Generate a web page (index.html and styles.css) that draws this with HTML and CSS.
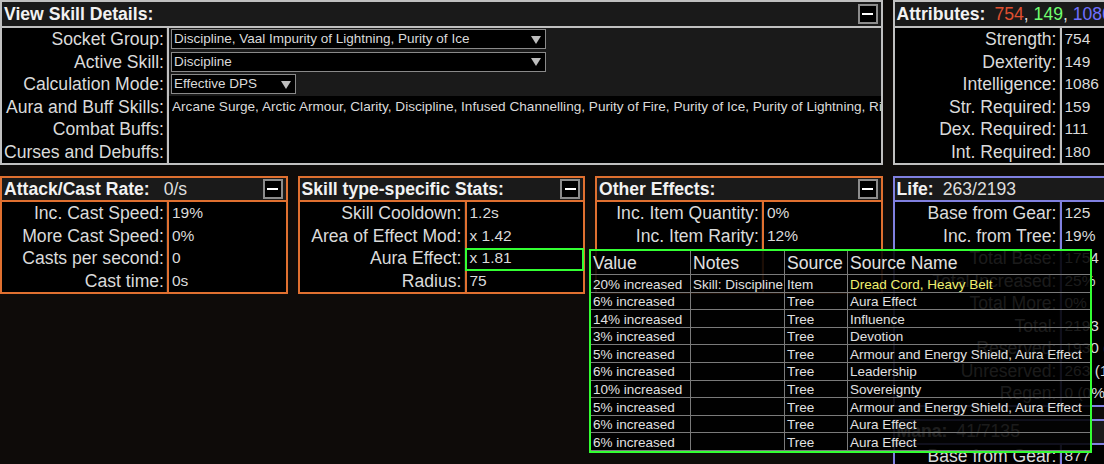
FILE: index.html
```html
<!DOCTYPE html>
<html>
<head>
<meta charset="utf-8">
<title>Calcs</title>
<link rel="stylesheet" href="styles.css">
</head>
<body>
<div class="calcs">
  <section class="sec gray span3 tall">
    <div class="head"><b>View Skill Details:</b><span class="min"></span></div>
    <div class="body">
      <div class="labels">
        <div>Socket Group:</div>
        <div>Active Skill:</div>
        <div>Calculation Mode:</div>
        <div>Aura and Buff Skills:</div>
        <div>Combat Buffs:</div>
        <div>Curses and Debuffs:</div>
      </div>
      <div class="values mixed">
        <div class="v"><div class="dd w1"><span>Discipline, Vaal Impurity of Lightning, Purity of Ice</span><i class="tri"></i></div></div>
        <div class="v"><div class="dd w1"><span>Discipline</span><i class="tri"></i></div></div>
        <div class="v"><div class="dd w2"><span>Effective DPS</span><i class="tri"></i></div></div>
        <div class="blk">
          <div class="v small">Arcane Surge, Arctic Armour, Clarity, Discipline, Infused Channelling, Purity of Fire, Purity of Ice, Purity of Lightning, Righteous Fire, Vaal Impurity of Lightning</div>
          <div class="v small"></div>
          <div class="v small"></div>
        </div>
      </div>
    </div>
  </section>

  <section class="sec gray tall">
    <div class="head"><b>Attributes:</b><span class="str">754</span>,&nbsp;<span class="dex">149</span>,&nbsp;<span class="int">1086</span></div>
    <div class="body">
      <div class="labels">
        <div>Strength:</div>
        <div>Dexterity:</div>
        <div>Intelligence:</div>
        <div>Str. Required:</div>
        <div>Dex. Required:</div>
        <div>Int. Required:</div>
      </div>
      <div class="values">
        <div class="v">754</div>
        <div class="v">149</div>
        <div class="v">1086</div>
        <div class="v">159</div>
        <div class="v">111</div>
        <div class="v">180</div>
      </div>
    </div>
  </section>

  <section class="sec orange">
    <div class="head"><b class="wide">Attack/Cast Rate:</b><span>0/s</span><span class="min"></span></div>
    <div class="body">
      <div class="labels">
        <div>Inc. Cast Speed:</div>
        <div>More Cast Speed:</div>
        <div>Casts per second:</div>
        <div>Cast time:</div>
      </div>
      <div class="values">
        <div class="v">19%</div>
        <div class="v">0%</div>
        <div class="v">0</div>
        <div class="v">0s</div>
      </div>
    </div>
  </section>

  <section class="sec orange">
    <div class="head"><b>Skill type-specific Stats:</b><span class="min"></span></div>
    <div class="body">
      <div class="labels">
        <div>Skill Cooldown:</div>
        <div>Area of Effect Mod:</div>
        <div>Aura Effect:</div>
        <div>Radius:</div>
      </div>
      <div class="values">
        <div class="v">1.2s</div>
        <div class="v">x 1.42</div>
        <div class="v hl">x 1.81</div>
        <div class="v">75</div>
      </div>
    </div>
  </section>

  <section class="sec orange">
    <div class="head"><b>Other Effects:</b><span class="min"></span></div>
    <div class="body">
      <div class="labels">
        <div>Inc. Item Quantity:</div>
        <div>Inc. Item Rarity:</div>
        <div></div>
        <div></div>
      </div>
      <div class="values">
        <div class="v">0%</div>
        <div class="v">12%</div>
        <div class="v"></div>
        <div class="v"></div>
      </div>
    </div>
  </section>

  <div class="stack">
    <section class="sec blue">
      <div class="head"><b>Life:</b><span>263/2193</span></div>
      <div class="body">
        <div class="labels">
          <div>Base from Gear:</div>
          <div>Inc. from Tree:</div>
          <div>Total Base:</div>
          <div>Total Increased:</div>
          <div>Total More:</div>
          <div>Total:</div>
          <div>Reserved:</div>
          <div>Unreserved:</div>
          <div>Regen:</div>
        </div>
        <div class="values">
          <div class="v">125</div>
          <div class="v">19%</div>
          <div class="v">1754</div>
          <div class="v">25%</div>
          <div class="v">0%</div>
          <div class="v">2193</div>
          <div class="v">1930 (88%)</div>
          <div class="v">263 (12%)</div>
          <div class="v">0 (0%)</div>
        </div>
      </div>
    </section>
    <section class="sec blue">
      <div class="head"><b>Mana:</b><span>41/7135</span></div>
      <div class="body">
        <div class="labels">
          <div>Base from Gear:</div>
          <div>Inc. from Tree:</div>
        </div>
        <div class="values">
          <div class="v">877</div>
          <div class="v">0%</div>
        </div>
      </div>
    </section>
  </div>
</div>

<div class="tip">
  <div class="h">Value</div><div class="h">Notes</div><div class="h">Source</div><div class="h">Source Name</div>
  <div>20% increased</div><div>Skill: Discipline</div><div>Item</div><div class="rare">Dread Cord, Heavy Belt</div>
  <div>6% increased</div><div></div><div>Tree</div><div>Aura Effect</div>
  <div>14% increased</div><div></div><div>Tree</div><div>Influence</div>
  <div>3% increased</div><div></div><div>Tree</div><div>Devotion</div>
  <div>5% increased</div><div></div><div>Tree</div><div>Armour and Energy Shield, Aura Effect</div>
  <div>6% increased</div><div></div><div>Tree</div><div>Leadership</div>
  <div>10% increased</div><div></div><div>Tree</div><div>Sovereignty</div>
  <div>5% increased</div><div></div><div>Tree</div><div>Armour and Energy Shield, Aura Effect</div>
  <div>6% increased</div><div></div><div>Tree</div><div>Aura Effect</div>
  <div>6% increased</div><div></div><div>Tree</div><div>Aura Effect</div>
</div>
</body>
</html>
```

FILE: styles.css
```css
html, body {
  margin: 0;
  padding: 0;
}
body {
  width: 1104px;
  height: 464px;
  overflow: hidden;
  position: relative;
  background: #0e0b09;
  font-family: "Liberation Sans", Arial, sans-serif;
  color: #dadada;
}
.calcs {
  display: grid;
  grid-template-columns: repeat(4, 287.5px);
  column-gap: 10px;
  row-gap: 11px;
  align-items: start;
  width: 1180px;
}
.span3 { grid-column: 1 / 4; }
.stack {
  display: flex;
  flex-direction: column;
  gap: 12px;
}
.sec {
  box-sizing: border-box;
  border: 2px solid var(--c);
  background: #1a1a1a;
}
.gray { --c: #c0c0c0; }
.orange { --c: #e07030; }
.blue { --c: #8080e0; }

.head {
  display: flex;
  align-items: center;
  height: 22px;
  padding-left: 2px;
  border-bottom: 2px solid var(--c);
  font-size: 17.6px;
  white-space: nowrap;
  color: #dedede;
}
.tall .head { height: 24px; }
.head b {
  font-weight: bold;
  color: #f2f2f2;
  margin-right: 9px;
}
.head b.wide { margin-right: 14px; }
.str { color: #e05030; }
.dex { color: #70ff70; }
.int { color: #7070ff; }

.min {
  margin-left: auto;
  margin-right: 3px;
  width: 20px;
  height: 20px;
  box-sizing: border-box;
  border: 2px solid #8c8c8c;
  background: #000;
  display: flex;
  align-items: center;
  justify-content: center;
  flex: none;
}
.min::after {
  content: "";
  width: 11px;
  height: 2px;
  background: #fff;
}

.body { display: flex; }
.labels {
  width: 164px;
  flex: none;
  background: #000;
  margin-right: 1px;
}
.labels div {
  height: 22.5px;
  line-height: 22.5px;
  text-align: right;
  padding-right: 2px;
  font-size: 17.6px;
  white-space: nowrap;
}
.values {
  flex: 1;
  min-width: 0;
  border-left: 2px solid var(--c);
  background: #000;
}
.values.mixed { background: transparent; }
.blk { background: #000; }
.v {
  height: 22.5px;
  line-height: 22.5px;
  padding-left: 3px;
  font-size: 15.5px;
  white-space: nowrap;
  overflow: hidden;
}
.v.small { font-size: 13.6px; padding-left: 3px; }
.mixed > .v { padding-left: 2px; }
.v.hl {
  position: relative;
  overflow: visible;
}
.v.hl::after {
  content: "";
  position: absolute;
  left: -2px;
  right: -1px;
  top: 1px;
  bottom: -1px;
  border: 2px solid #33ff33;
}

.dd {
  box-sizing: border-box;
  height: 20px;
  margin-top: 1px;
  border: 1px solid #8a8a8a;
  background: #000;
  display: flex;
  align-items: center;
  padding: 0 4px 0 2px;
  font-size: 13.5px;
  line-height: 18px;
}
.dd.w1 { width: 375px; }
.dd.w2 { width: 125px; }
.dd span { flex: 1; overflow: hidden; }
.tri {
  width: 0;
  height: 0;
  border-left: 5px solid transparent;
  border-right: 5px solid transparent;
  border-top: 8px solid #bdbdbd;
  margin-top: 1px;
}

.tip {
  position: absolute;
  left: 589px;
  top: 249px;
  width: 503px;
  height: 204px;
  box-sizing: border-box;
  border: 2px solid #33ff33;
  background: rgba(0, 0, 0, 0.88);
  display: grid;
  grid-template-columns: 100px 94px 63px 1fr;
  grid-template-rows: 24px repeat(10, 17.6px);
  overflow: hidden;
}
.tip > div {
  box-sizing: border-box;
  border-right: 1px solid #7a7a7a;
  border-bottom: 1px solid #7a7a7a;
  padding: 1.5px 0 0 2px;
  font-size: 13.5px;
  line-height: 15px;
  white-space: nowrap;
  overflow: hidden;
  color: #e0e0e0;
}
.tip > div:nth-child(4n) { border-right: none; }
.tip > .h {
  font-size: 17.6px;
  line-height: 21px;
}
.tip > .rare { color: #f0f070; }
```
